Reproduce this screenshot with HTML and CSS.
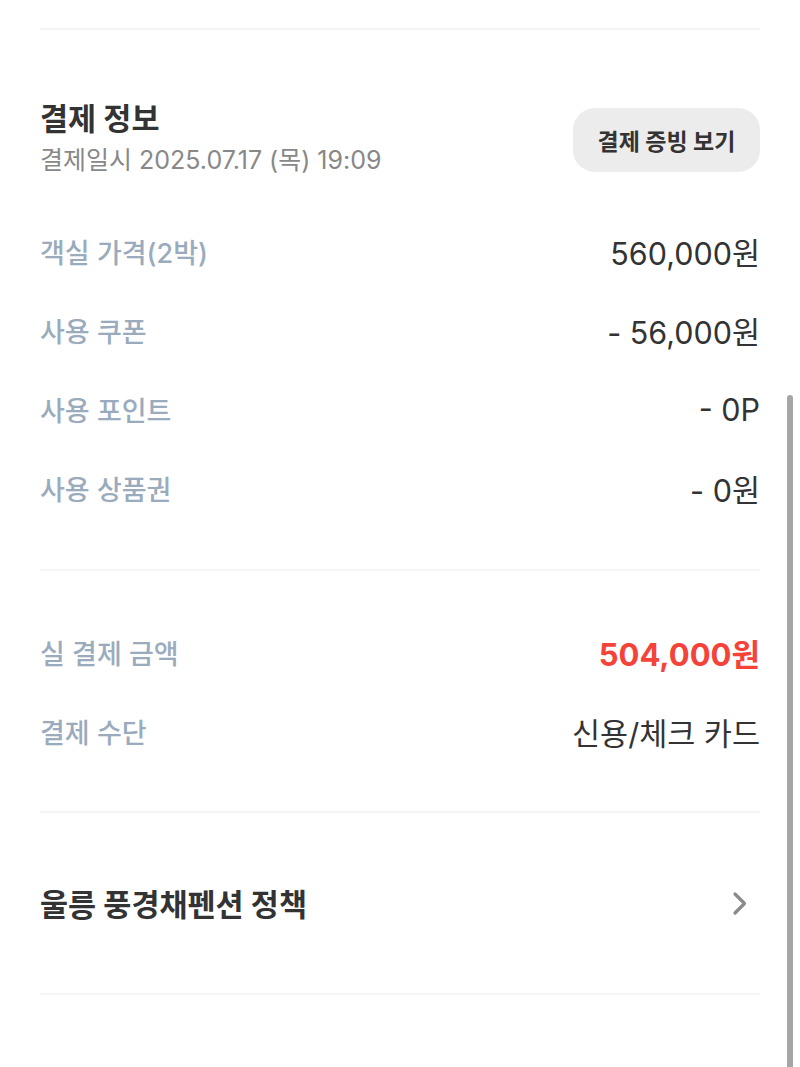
FILE: index.html
```html
<!DOCTYPE html>
<html lang="ko">
<head>
<meta charset="utf-8">
<link rel="stylesheet" href="styles.css">
</head>
<body>
<div class="page">
  <hr class="divider top">
  <section class="pay-head">
    <div class="head-text">
      <h2 class="title">결제 정보</h2>
      <p class="date">결제일시 2025.07.17 (목) 19:09</p>
    </div>
    <button class="proof-btn">결제 증빙 보기</button>
  </section>
  <section class="rows">
    <div class="row"><span class="label">객실 가격(2박)</span><span class="value">560,000원</span></div>
    <div class="row"><span class="label">사용 쿠폰</span><span class="value">- 56,000원</span></div>
    <div class="row"><span class="label">사용 포인트</span><span class="value">- 0P</span></div>
    <div class="row"><span class="label">사용 상품권</span><span class="value">- 0원</span></div>
  </section>
  <hr class="divider">
  <section class="rows total">
    <div class="row"><span class="label">실 결제 금액</span><span class="value red">504,000원</span></div>
    <div class="row"><span class="label">결제 수단</span><span class="value">신용/체크 카드</span></div>
  </section>
  <hr class="divider">
  <section class="policy">
    <span class="policy-title">울릉 풍경채펜션 정책</span>
    <svg class="chev" width="16" height="25" viewBox="0 0 16 25"><path d="M3 3 L12.5 12.5 L3 22" fill="none" stroke="#8a8a8a" stroke-width="3.2" stroke-linecap="round" stroke-linejoin="round"/></svg>
  </section>
  <hr class="divider">
</div>
<div class="scrollbar"></div>
</body>
</html>
```
FILE: styles.css
```css
html, body {
  margin: 0;
  padding: 0;
  background: #fff;
}
body {
  font-family: Inter, "Noto Sans CJK KR", sans-serif;
  color: #333;
  width: 800px;
  height: 1067px;
  overflow: hidden;
  position: relative;
}
.page {
  padding: 0 40px;
}
.divider {
  border: none;
  height: 2px;
  background: #f4f4f4;
  margin: 0;
}
.divider.top {
  margin-top: 28px;
}
.pay-head {
  display: flex;
  justify-content: space-between;
  align-items: flex-start;
  padding-top: 71px;
}
.title {
  margin: 0;
  font-size: 30.5px;
  font-weight: 700;
  line-height: 36px;
  color: #333;
}
.date {
  margin: 7px 0 0;
  font-size: 25px;
  line-height: 32px;
  color: #888;
}
.proof-btn {
  font-family: inherit;
  border: none;
  background: #ececec;
  border-radius: 22px;
  height: 64px;
  width: 187px;
  font-size: 23px;
  font-weight: 700;
  color: #333;
  margin-top: 7px;
  padding: 0;
}
.rows {
  padding: 36px 0 41px;
  display: flex;
  flex-direction: column;
}
.row {
  display: flex;
  justify-content: space-between;
  align-items: center;
  height: 79px;
}
.label {
  font-size: 27px;
  font-weight: 500;
  color: #9aabbd;
}
.value {
  font-size: 30.5px;
  color: #333;
}
.value.red {
  color: #f5433a;
  font-weight: 700;
  font-size: 31px;
}
.rows.total {
  padding: 42px 0 40px;
}
.policy {
  display: flex;
  justify-content: space-between;
  align-items: center;
  height: 180px;
}
.policy-title {
  font-size: 30.5px;
  font-weight: 700;
  color: #333;
}
.chev {
  margin-right: 12px;
}
.scrollbar {
  position: absolute;
  left: 787px;
  top: 395px;
  width: 6px;
  height: 700px;
  border-radius: 3px;
  background: #a6a6a6;
}
```
